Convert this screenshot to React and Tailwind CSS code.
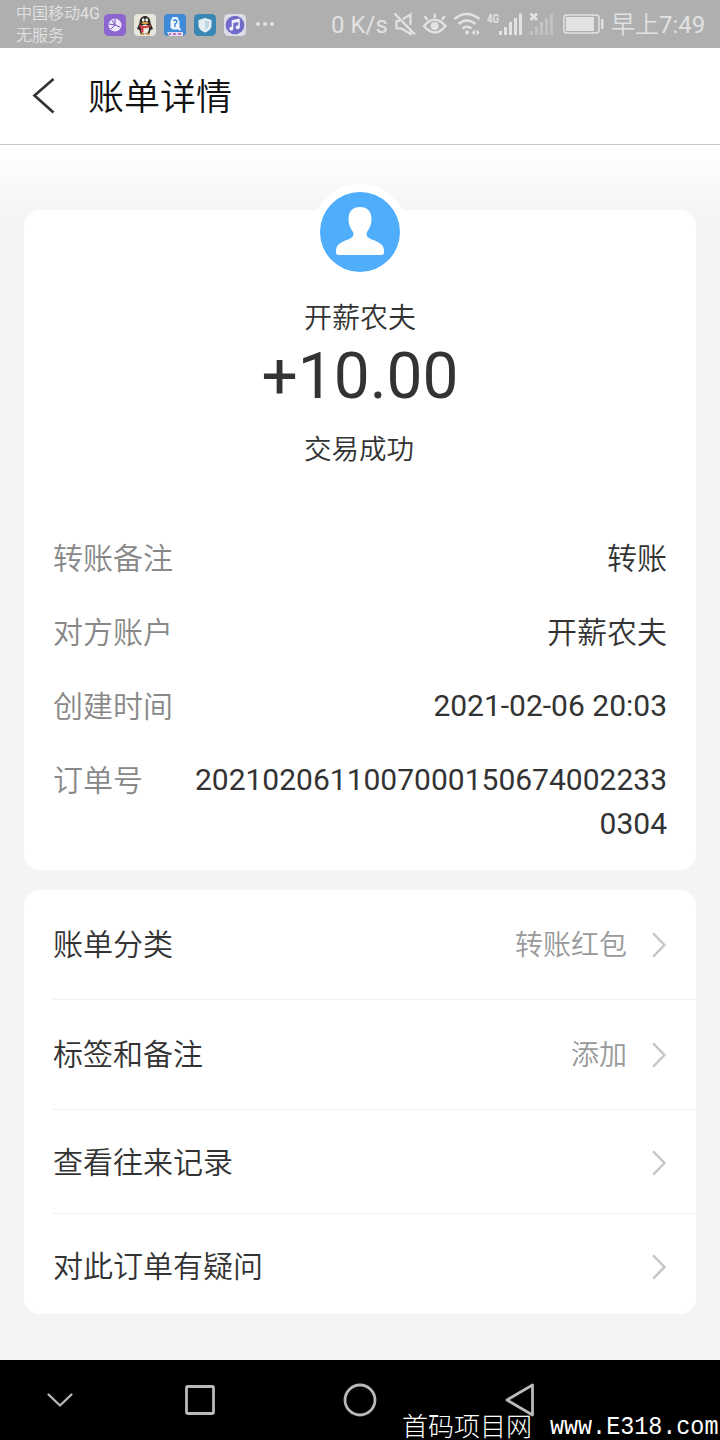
const DETAILS = [
  ["转账备注", "转账"],
  ["对方账户", "开薪农夫"],
  ["创建时间", "2021-02-06 20:03"],
];

function StatusBar() {
  return (
    <div className="flex h-12 shrink-0 items-center bg-[#afafaf] pl-4 text-[#e2e2e2]">
      <div className="w-[88px] shrink-0 whitespace-nowrap pt-[2px] text-[16px] font-[350] leading-[22px]">
        <div>中国移动<span className="font-normal">4G</span></div>
        <div>无服务</div>
      </div>
      <div className="flex h-[22px] w-[174px] shrink-0 items-center gap-2 pt-[2px]">
        <svg className="size-[22px] shrink-0" viewBox="0 0 22 22" fill="none">
          <rect width="22" height="22" rx="4.5" fill="#8c65cf" />
          <circle cx="11" cy="11" r="6.5" fill="#eee9fa" />
          <path d="M8 6l3 5 5 2M11 11l-4 4M5 10l6 1M11 4.5V11" stroke="#7750bd" strokeWidth="1" />
        </svg>
        <svg className="size-[22px] shrink-0" viewBox="0 0 22 22">
          <rect width="22" height="22" rx="4" fill="#e7e5dc" />
          <path d="M5.500 9C5.500-.5 16.500-.5 16.500 9l2.500 6-2.500 1-1 3.500H6.500l-1-3.500L3 15z" fill="#302a26" />
          <ellipse cx="11" cy="15" rx="4" ry="4.500" fill="#f0ebe3" />
          <ellipse cx="9.300" cy="6" rx="1.300" ry="1.800" fill="#fff" />
          <ellipse cx="12.700" cy="6" rx="1.300" ry="1.800" fill="#fff" />
          <ellipse cx="11" cy="9" rx="3.600" ry="1.100" fill="#e3a33d" />
          <path d="M5.500 10.500q5.500 3 11 0v2.200q-4 2-7 1.600v4H7v-4.600l-1.500-1z" fill="#cf4248" />
          <path d="M6 20h4m2 0h4" stroke="#c98a35" strokeWidth="1.600" />
        </svg>
        <svg className="size-[22px] shrink-0" viewBox="0 0 22 22" fill="none">
          <rect width="22" height="22" rx="4" fill="#3d8ad9" />
          <path d="M6.500 13.500V7.500l2-4.500h5l2 4.500v6l-2 2H8.500z" fill="#eef5fc" />
          <path d="M9.500 7q1.500-2 3.500 0 0 2-2 3v3" stroke="#3986d5" strokeWidth="1.400" />
          <path d="M13 13l3.500 3" stroke="#eef5fc" strokeWidth="2" />
          <path d="M3 18h16v4H5z" fill="#e4d9ef" />
          <path d="M5 20h2m2 0h3m2 0h3" stroke="#bd76b8" strokeWidth="2" />
        </svg>
        <svg className="size-[22px] shrink-0" viewBox="0 0 22 22">
          <rect width="22" height="22" rx="4.500" fill="#3a86b4" />
          <path d="M11 4l6.500 2v5c0 4-3 6-6.500 7.500C7.500 17 4.500 15 4.500 11V6z" fill="#e5eff3" />
          <path d="M11 6.500v9.500c3-1.500 4-3 4-5V7.500z" fill="#bdd7e1" />
        </svg>
        <svg className="size-[22px] shrink-0" viewBox="0 0 22 22" fill="none">
          <rect width="22" height="22" rx="4.500" fill="#dddde8" />
          <circle cx="11" cy="11" r="9.300" fill="#706bc9" />
          <path d="M8.500 14.500V7l6.500-1.500v7.500M8.500 8.500L15 7" stroke="#f1f0fb" strokeWidth="1.600" />
          <circle cx="7.300" cy="14.700" r="2" fill="#f1f0fb" />
          <circle cx="13.700" cy="13.300" r="2" fill="#f1f0fb" />
        </svg>
        <svg className="ml-[2px] h-[22px] w-5 shrink-0" viewBox="0 0 20 22" fill="#e2e2e2">
          <circle cx="2" cy="10" r="2" />
          <circle cx="9" cy="10" r="2" />
          <circle cx="16" cy="10" r="2" />
        </svg>
      </div>
      <div className="ml-[53px] w-[62px] shrink-0 whitespace-nowrap pt-[2px] text-[24px] leading-[48px]">0 K/s</div>
      <svg className="h-12 w-[218px] shrink-0" viewBox="393 0 218 48" fill="none" stroke="#e2e2e2" strokeWidth="2">
        <path d="M394.500 13.500L415 34.500" strokeWidth="2.400" />
        <path d="M403 19l7.500-4.500V25M400 21h-3.500v7.500h5l9 5.500v-5" strokeWidth="2.200" />
        <path d="M424 26q10.500-12.500 21.500 0-10.500 13-21.500 0z" strokeWidth="2.400" />
        <circle cx="434.700" cy="26" r="4" fill="#e2e2e2" stroke="none" />
        <path d="M434.700 18v-4.500M427.500 20l-3-4M442 20l2.800-4" strokeWidth="2.200" />
        <path d="M454.500 19q12-10 25 0M458.500 24q8.500-7 17 0M462.500 28.500q4.500-3.500 9 0" strokeWidth="2.600" />
        <circle cx="467" cy="32.500" r="2" fill="#e2e2e2" stroke="none" />
        <path d="M475 29.500v6l-3.500-3zM476.500 29.500v6l3.500-3z" fill="#e2e2e2" stroke="none" />
        <text x="487" y="23" className="font-['Roboto'] text-[12px] font-bold" textLength="12" lengthAdjust="spacingAndGlyphs" fill="#e2e2e2" stroke="none">4G</text>
        <path d="M500.500 35v-4M505.500 35v-8M510.500 35V22M515.500 35V18M520.500 35V13.500" strokeWidth="3" />
        <path d="M530.500 13.500l6.500 6.500m0-6.500l-6.500 6.500" strokeWidth="2.600" />
        <path d="M531.500 35v-4M536.500 35v-8M541.500 35V22M546.500 35V18M551.500 35V13.500" strokeWidth="3" stroke="#c2c2c2" />
        <rect x="564" y="15" width="35" height="18" rx="3" strokeWidth="1.500" />
        <rect x="566" y="17" width="28" height="14" fill="#e2e2e2" stroke="none" />
        <path d="M602.300 19v10" strokeWidth="2.500" />
      </svg>
      <div className="whitespace-nowrap pt-[2px] text-[24px] font-[350] leading-[48px]">早上<span className="font-normal">7:49</span></div>
    </div>
  );
}

function Chevron() {
  return (
    <svg className="ml-6 h-7 w-4 shrink-0" viewBox="0 0 16 28" fill="none" stroke="#c5c5c5" strokeWidth="2.500" strokeLinecap="round" strokeLinejoin="round">
      <path d="M2.800 3L13.500 14 2.800 25" />
    </svg>
  );
}

function Option({ label, value, className }) {
  return (
    <div className={`ml-[29px] flex items-center pr-[29px] ${className}`}>
      <div className="flex-1 text-[30px] font-[350] leading-10 text-[#333]">{label}</div>
      {value && <div className="pt-[3px] text-[28px] font-[350] leading-10 text-[#999]">{value}</div>}
      <Chevron />
    </div>
  );
}

export default function App() {
  return (
    <div className="flex h-[1440px] w-[720px] flex-col overflow-hidden bg-[#f4f4f4] font-['Roboto','Noto_Sans_CJK_SC',sans-serif]">
      <StatusBar />
      <header className="flex h-[97px] shrink-0 items-center border-b border-[#c8c8c8] bg-white pl-8">
        <svg className="h-10 w-6" viewBox="0 0 24 40" fill="none" stroke="#333" strokeWidth="2.700">
          <path d="M21.500 3L2.500 19.500l19 17" />
        </svg>
        <h1 className="ml-8 pt-[3px] text-[36px] font-[350] leading-[48px] text-[#111]">账单详情</h1>
      </header>
      <main className="h-[1215px] shrink-0 bg-linear-to-b from-white to-[#f4f4f4] to-[75px] px-6 pt-[65px]">
        <section className="flex h-[660px] flex-col rounded-2xl bg-white">
          <div className="-mt-[26px] flex h-24 w-24 items-center justify-center self-center rounded-full bg-white">
            <svg className="size-20" viewBox="0 0 80 80">
              <circle cx="40" cy="40" r="40" fill="#50adfb" />
              <path d="M40 15c-8 0-11.500 5-11.500 12 0 6 2.500 10 4.500 13 1.500 4-1 6-5 7.500-8 3-12 5.500-12 11.500v1.500q0 2.500 3 2.500h42q3 0 3-2.500V59c0-6-4-8.500-12-11.500-4-1.500-6.500-3.500-5-7.500 2-3 4.500-7 4.500-13 0-7-3.500-12-11.500-12z" fill="white" />
            </svg>
          </div>
          <div className="mt-[19px] text-center text-[28px] font-[350] leading-10 text-[#333]">开薪农夫</div>
          <div className="-mt-[2px] text-center text-[64px] leading-20 text-[#333]">+10.00</div>
          <div className="mr-[2px] mt-[13px] text-center text-[27.500px] font-[350] leading-10 text-[#333]">交易成功</div>
          <div className="mt-[67px] flex flex-col gap-[30px] px-[29px] text-[30px] font-[350] leading-11 text-[#333]">
            {DETAILS.map(([label, value]) => (
              <div key={label} className="flex justify-between">
                <span className="text-[#888]">{label}</span>
                <span className={/^\d/.test(value) ? "-mt-px font-normal" : ""}>{value}</span>
              </div>
            ))}
            <div className="flex justify-between">
              <span className="text-[#888]">订单号</span>
              <span className="-mt-px w-[480px] break-all text-right font-normal">20210206110070001506740022330304</span>
            </div>
          </div>
        </section>
        <section className="mt-5 flex h-[424px] flex-col rounded-2xl bg-white">
          <Option label="账单分类" value="转账红包" className="h-[110px] border-b border-[#f0f0f0]" />
          <Option label="标签和备注" value="添加" className="h-[110px] border-b border-[#f0f0f0]" />
          <Option label="查看往来记录" className="h-[104px] border-b border-[#f0f0f0] pt-[2px]" />
          <Option label="对此订单有疑问" className="h-[100px] pt-[6px]" />
        </section>
      </main>
      <nav className="relative h-20 shrink-0 bg-black">
        <svg className="h-20 w-[720px]" viewBox="0 0 720 80" fill="none" stroke="#b9b9b9" strokeWidth="2.800" strokeLinejoin="round" strokeLinecap="round">
          <path d="M48.500 34.500L60 45.500l11.500-11" strokeWidth="2.300" />
          <rect x="186.500" y="26.500" width="27" height="27" rx="1" />
          <circle cx="360" cy="40" r="15" />
          <path d="M532.500 25v30L507 40z" />
        </svg>
        <div className="absolute bottom-0 left-[402px] flex h-[26px] items-center whitespace-pre leading-[26px] text-white">
          <span className="w-[148px] text-[26px] font-light">首码项目网</span>
          <span className="scale-y-110 font-['Liberation_Mono',monospace] text-[23.400px] leading-[23px]">www.E318.com</span>
        </div>
      </nav>
    </div>
  );
}
